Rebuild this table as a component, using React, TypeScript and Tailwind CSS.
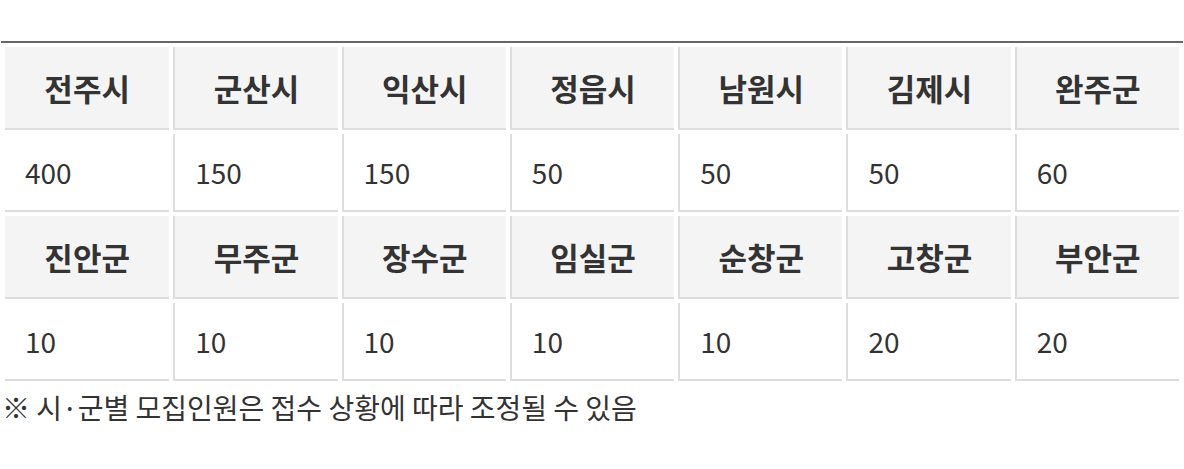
import React from "react";

const rows: { head: string[]; vals: string[] }[] = [
  {
    head: ["전주시", "군산시", "익산시", "정읍시", "남원시", "김제시", "완주군"],
    vals: ["400", "150", "150", "50", "50", "50", "60"],
  },
  {
    head: ["진안군", "무주군", "장수군", "임실군", "순창군", "고창군", "부안군"],
    vals: ["10", "10", "10", "10", "10", "20", "20"],
  },
];

export default function App() {
  return (
    <div
      className="w-[1184px] h-[469px] bg-white pt-[41px] px-px"
      style={{ fontFamily: '"Noto Sans CJK KR", "Noto Sans", sans-serif' }}
    >
      <table className="w-full table-fixed border-separate border-spacing-1 border-t-2 border-[#666]">
        <tbody>
          {rows.map((r, i) => (
            <React.Fragment key={i}>
              <tr>
                {r.head.map((h, j) => (
                  <th
                    key={h}
                    className={`bg-[#f4f4f4] text-[#333] font-bold text-[31px] leading-[81px] p-0 text-center border-b-2 border-[#dddddd] ${
                      j > 0 ? "border-l-2" : ""
                    }`}
                  >
                    {h}
                  </th>
                ))}
              </tr>
              <tr>
                {r.vals.map((v, j) => (
                  <td
                    key={j}
                    className={`bg-white text-[#333] text-[28px] leading-[76px] py-0 pl-5 text-left border-b-2 border-[#dddddd] ${
                      j > 0 ? "border-l-2" : ""
                    }`}
                  >
                    {v}
                  </td>
                ))}
              </tr>
            </React.Fragment>
          ))}
        </tbody>
      </table>
      <p className="text-[28px] leading-[36px] text-[#333] pl-px mt-[4px]">
        ※ 시·군별 모집인원은 접수 상황에 따라 조정될 수 있음
      </p>
    </div>
  );
}
